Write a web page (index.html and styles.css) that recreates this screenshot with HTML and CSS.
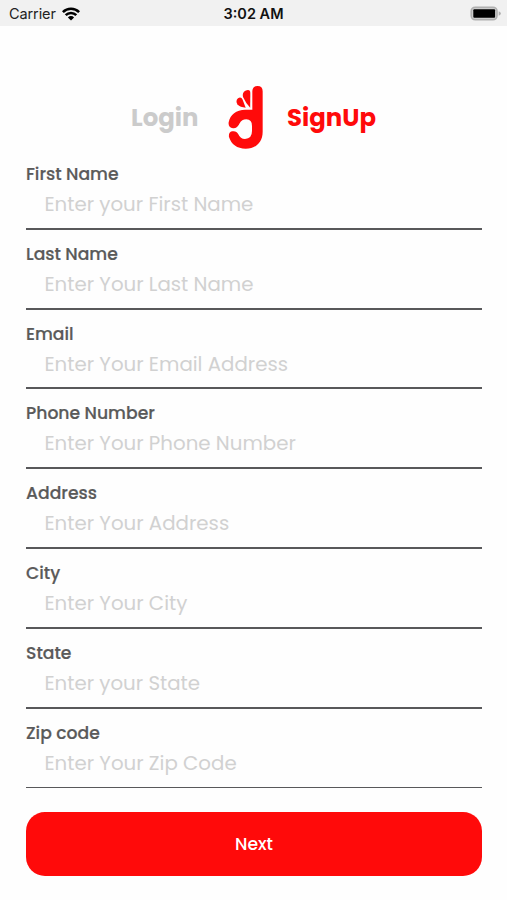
FILE: index.html
```html
<!doctype html>
<html lang="en">
	<head>
		<meta charset="utf-8">
		<title>SignUp</title>
		<link rel="stylesheet" href="styles.css">
	</head>
	<body>
		<div class="statusbar">
			<div class="carrier">
				<span>Carrier</span>
				<svg class="wifi" viewBox="0 0 18 14" width="18" height="14">
					<path d="M0.9 5.1a11.5 11.5 0 0 1 16.2 0M3.7 8.2a7.5 7.5 0 0 1 10.6 0" fill="none" stroke="#000" stroke-width="2.6"/>
					<path d="M5.9 10.4a4.4 4.4 0 0 1 6.2 0L9 13.5z"/>
				</svg>
			</div>
			<div class="time">3:02 AM</div>
			<div class="power">
				<svg viewBox="0 0 31 15" width="31" height="15">
					<rect x="1.2" y="1.2" width="25.8" height="12.6" rx="4" fill="#ccc" stroke="#b0b0b0" stroke-width="1.6"/>
					<rect x="3.3" y="3.2" width="21.8" height="8.6" rx="1"/>
					<path d="M28.7 5.2q2.2 1 2.2 2.300t-2.2 2.3z" fill="#b0b0b0"/>
				</svg>
			</div>
		</div>

		<div class="tabs">
			<a class="tab login">Login</a>
			<svg class="logo" viewBox="54 30 108 192" width="36" height="64">
				<path d="M127 104V48Q128 33 142.500 33Q158 33 158 49V170C158 203 136 221 107 221C81 221 64 208 57 186Q55 172 66 169Q79 166 85 178Q91 192 105 192Q126 191 126 168V153Q126 133 109 133Q95 133 89 145Q82 161 69 160Q54 157 56 142C61 118 78 105 106 104z" fill="#ff0a0a"/>
				<path d="M120.500 98Q108 86 99 66Q96 52 106 47Q121 41 121 54z" fill="#ff0a0a"/>
				<path d="M107 98Q91 98 82 88Q76 77 84 70Q93 64 98 74z" fill="#ff0a0a"/>
			</svg>
			<a class="tab signup">SignUp</a>
		</div>

		<form class="form">
			<div class="field">
				<label for="first">First Name</label>
				<input id="first" type="text" placeholder="Enter your First Name">
			</div>
			<div class="field">
				<label for="last">Last Name</label>
				<input id="last" type="text" placeholder="Enter Your Last Name">
			</div>
			<div class="field">
				<label for="email">Email</label>
				<input id="email" type="text" placeholder="Enter Your Email Address">
			</div>
			<div class="field">
				<label for="phone">Phone Number</label>
				<input id="phone" type="text" placeholder="Enter Your Phone Number">
			</div>
			<div class="field">
				<label for="address">Address</label>
				<input id="address" type="text" placeholder="Enter Your Address">
			</div>
			<div class="field">
				<label for="city">City</label>
				<input id="city" type="text" placeholder="Enter Your City">
			</div>
			<div class="field">
				<label for="state">State</label>
				<input id="state" type="text" placeholder="Enter your State">
			</div>
			<div class="field last">
				<label for="zip">Zip code</label>
				<input id="zip" type="text" placeholder="Enter Your Zip Code">
			</div>
			<button class="next" type="button">Next</button>
		</form>
	</body>
</html>
```

FILE: styles.css
```css
* {
	box-sizing: border-box;
}
body {
	margin: 0;
	height: 900px;
	background: #fefefe;
	font-family: Poppins, Inter, sans-serif;
	overflow: hidden;
}

/* status bar */
.statusbar {
	display: grid;
	grid-template-columns: 1fr auto 1fr;
	align-items: center;
	height: 26px;
	padding: 1px 6px 0 9px;
	background: #f1f1f1;
	font-family: Inter, sans-serif;
	font-size: 14.5px;
	color: #222;
}
.carrier {
	display: flex;
	align-items: center;
	gap: 6px;
}
.carrier span {
	letter-spacing: -0.1px;
}
.time {
	margin-right: 3px;
	font-weight: 600;
	color: #111;
}
.power {
	display: flex;
	justify-content: flex-end;
}

/* login / signup switch */
.tabs {
	display: flex;
	align-items: center;
	height: 124px;
	padding: 59px 0 0 131px;
}
.tab {
	font-size: 24.4px;
	font-weight: 700;
}
.login {
	width: 97px;
	color: #cbcbcb;
}
.signup {
	margin-left: 23px;
	color: #ff0a0a;
}
.logo {
	margin-top: -1px;
}

.form {
	padding: 0 25px 0 26px;
}
.field {
	display: flex;
	flex-direction: column;
	height: 79.8px;
	padding-top: 12px;
	border-bottom: 2px solid #58585a;
}
.field.last {
	border-bottom-width: 1px;
}
.field label {
	line-height: 24px;
	font-size: 17.2px;
	font-weight: 500;
	color: #5a5a5a;
	-webkit-text-stroke: 0.2px #5a5a5a;
}
.field input {
	height: 36px;
	padding: 0 0 0 18.4px;
	border: 0;
	outline: 0;
	background: none;
	font-family: inherit;
	font-size: 19.8px;
}
.field input::placeholder {
	color: #d1d1d1;
	opacity: 1;
}
.next {
	display: block;
	width: 100%;
	height: 64px;
	margin-top: 24px;
	border: 0;
	border-radius: 19px;
	background: #ff0a0a;
	color: #fff;
	font-family: inherit;
	font-size: 17.2px;
	font-weight: 500;
}
```
